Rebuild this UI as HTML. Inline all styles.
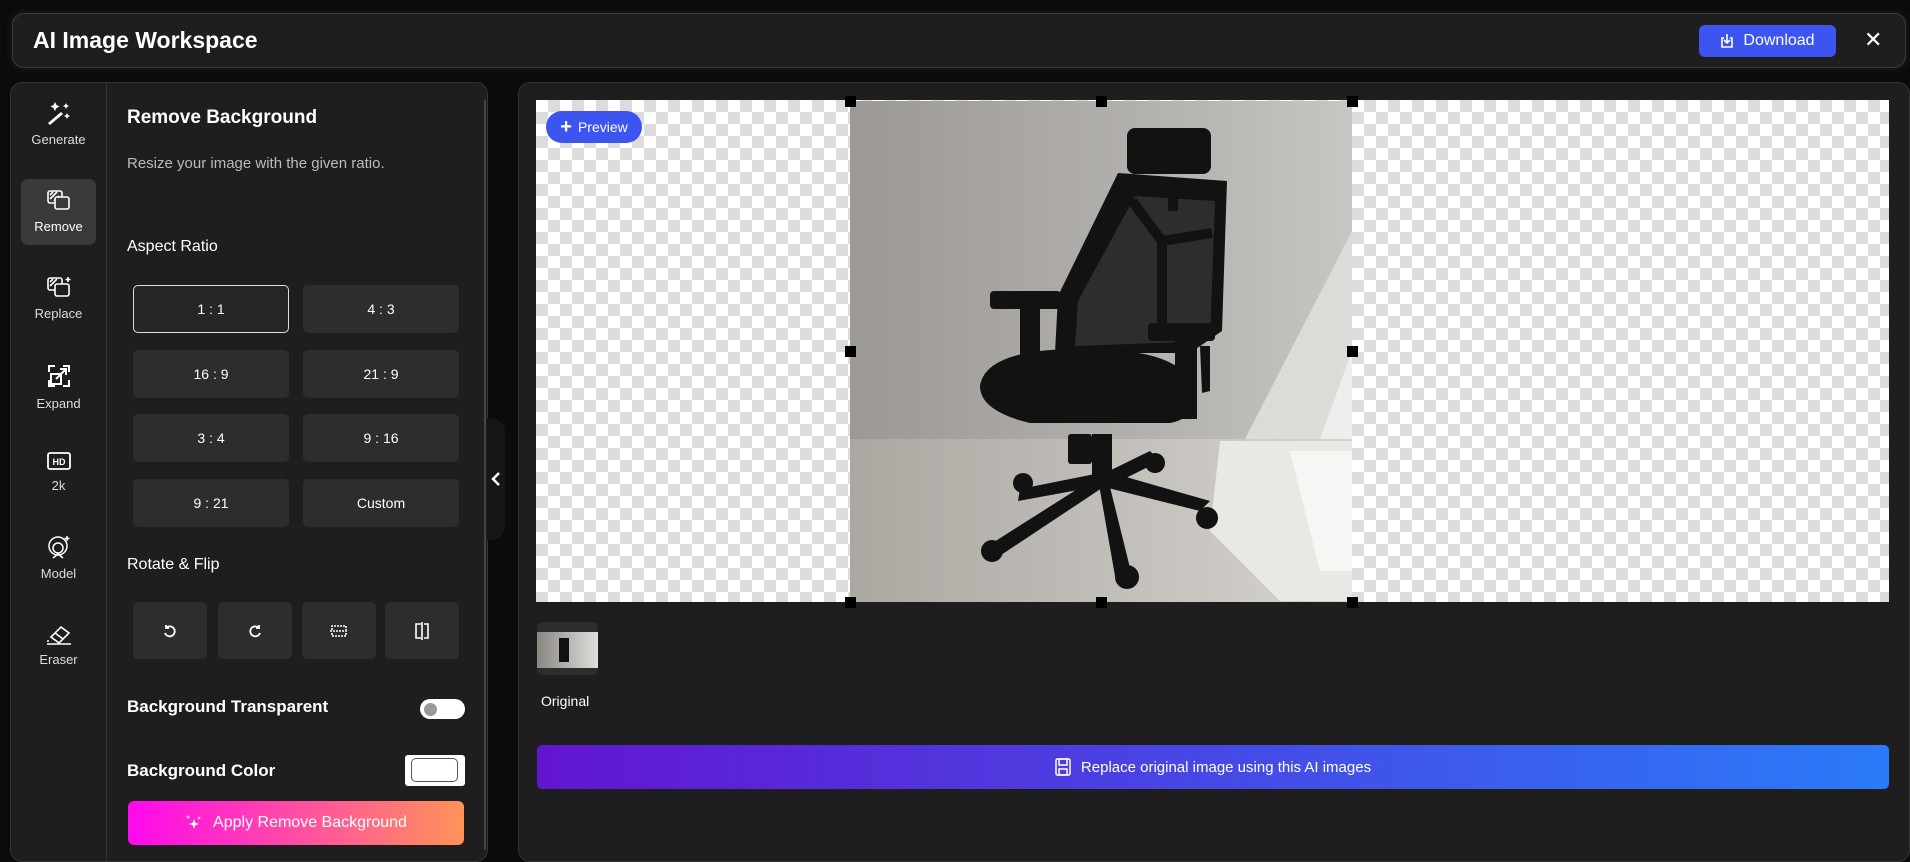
<!DOCTYPE html>
<html><head><meta charset="utf-8"><style>
*{box-sizing:border-box;margin:0;padding:0}
body{width:1910px;height:850px;background:#0b0b0b;font-family:"Liberation Sans",sans-serif;color:#fff;position:relative;overflow:hidden}
.abs{position:absolute}
.header{left:12px;top:13px;width:1894px;height:55px;background:#1e1e1e;border:1px solid #3a3a3a;border-radius:12px;box-shadow:0 0 8px #222}
.title{left:33px;top:27px;font-size:23px;font-weight:bold}
.dl{left:1699px;top:25px;width:137px;height:32px;background:#3d55f0;border-radius:6px;font-size:16px;display:flex;align-items:center;justify-content:center;gap:9px}
.x{left:1864px;top:27px;font-size:22px}
.lp{left:10px;top:82px;width:478px;height:780px;background:#1e1e1e;border:1px solid #333;border-radius:12px}
.side{left:10px;top:82px;width:97px;height:780px;border-right:1px solid #333}
.si{position:absolute;left:21px;width:75px;text-align:center;font-size:13px;color:#ddd}
.si svg{display:block;margin:0 auto 6px}
.act{background:#3a3a3a;border-radius:7px;height:66px;top:179px;padding-top:10px;color:#fff}
.h{font-size:19px;font-weight:bold;left:127px}
.sub{left:127px;top:155px;font-size:15px;color:#bbb}
.lab{left:127px;font-size:16px}
.rb{position:absolute;background:#2d2d2d;border-radius:5px;font-size:14px;display:flex;align-items:center;justify-content:center;height:48px;width:156px}
.rt{position:absolute;background:#2d2d2d;border-radius:5px;height:57px;width:74px;top:602px;display:flex;align-items:center;justify-content:center}
.rp{left:518px;top:82px;width:1392px;height:780px;background:#1e1e1e;border:1px solid #333;border-radius:12px}
.canvas{left:536px;top:100px;width:1353px;height:502px;background-color:#fff;background-image:linear-gradient(45deg,#dcdcdc 25%,transparent 25%,transparent 75%,#dcdcdc 75%),linear-gradient(45deg,#dcdcdc 25%,transparent 25%,transparent 75%,#dcdcdc 75%);background-size:24px 24px;background-position:0 0,12px 12px}
.hd{position:absolute;width:11px;height:11px;background:#000}
</style></head><body>
<div class="abs header"></div>
<div class="abs title">AI Image Workspace</div>
<div class="abs dl"><svg width="14" height="16" viewBox="0 0 14 16" fill="none" stroke="#fff" stroke-width="1.6"><path d="M4 5H2v9h10V5h-2M7 1v9M4 7l3 3 3-3"/></svg>Download</div>
<div class="abs x">✕</div>

<div class="abs lp"></div>
<div class="abs side"></div>
<div class="si" style="top:100px"><svg width="28" height="26" viewBox="0 0 28 26" fill="#fff"><path d="M3 23l13-11 2 2-13 11z"/><path d="M10 2l1.5 3 3 1.5-3 1.5L10 11 8.5 8 5.5 6.5 8.5 5z"/><path d="M21 3l1 2 2 1-2 1-1 2-1-2-2-1 2-1z"/><path d="M22 13l1 2 2 1-2 1-1 2-1-2-2-1 2-1z"/></svg>Generate</div>
<div class="si act"><svg width="28" height="24" viewBox="0 0 28 24" fill="none" stroke="#fff" stroke-width="1.6"><rect x="3" y="2" width="14" height="12" rx="2"/><path d="M5 10l7-7M5 6l3-3M9 12l5-5" /><rect x="10" y="8" width="14" height="12" rx="2" fill="#3a3a3a"/></svg>Remove</div>
<div class="si" style="top:276px"><svg width="28" height="24" viewBox="0 0 28 24" fill="none" stroke="#fff" stroke-width="1.6"><rect x="3" y="2" width="14" height="12" rx="2"/><path d="M5 10l7-7M5 6l3-3"/><rect x="10" y="8" width="14" height="12" rx="2" fill="#1e1e1e"/><path d="M23 1v5M20.5 3.5h5"/></svg>Replace</div>
<div class="si" style="top:362px"><svg width="28" height="28" viewBox="0 0 28 28" fill="none" stroke="#fff" stroke-width="2"><path d="M4 10V4h6M18 4h6v6M24 18v6h-6M10 24H4v-6"/><rect x="6" y="12" width="10" height="10"/><path d="M11 17l10-10M15 7h6v6"/></svg>Expand</div>
<div class="si" style="top:450px"><svg width="26" height="22" viewBox="0 0 26 22" fill="none" stroke="#fff" stroke-width="1.8"><rect x="2" y="3" width="22" height="16" rx="2"/><text x="13" y="15" font-size="9" font-weight="bold" fill="#fff" stroke="none" text-anchor="middle" font-family="Liberation Sans">HD</text></svg>2k</div>
<div class="si" style="top:534px"><svg width="28" height="26" viewBox="0 0 28 26" fill="none" stroke="#fff" stroke-width="1.5"><circle cx="13" cy="12" r="9"/><circle cx="13" cy="14" r="5"/><path d="M8 24l5-4 5 4M22 2v5M19.5 4.5h5"/></svg>Model</div>
<div class="si" style="top:622px"><svg width="30" height="24" viewBox="0 0 30 24" fill="none" stroke="#fff" stroke-width="1.6"><path d="M7 15l10-10 8 6-10 10z"/><path d="M11 11l8 6M3 19h2M3 22h24"/></svg>Eraser</div>

<div class="abs h" style="top:107px">Remove Background</div>
<div class="abs sub">Resize your image with the given ratio.</div>
<div class="abs lab" style="top:238px">Aspect Ratio</div>
<div class="rb" style="left:133px;top:285px;border:1.5px solid #ddd;background:#262626">1 : 1</div>
<div class="rb" style="left:303px;top:285px">4 : 3</div>
<div class="rb" style="left:133px;top:350px">16 : 9</div>
<div class="rb" style="left:303px;top:350px">21 : 9</div>
<div class="rb" style="left:133px;top:414px">3 : 4</div>
<div class="rb" style="left:303px;top:414px">9 : 16</div>
<div class="rb" style="left:133px;top:479px">9 : 21</div>
<div class="rb" style="left:303px;top:479px">Custom</div>
<div class="abs lab" style="top:556px">Rotate &amp; Flip</div>
<div class="rt" style="left:133px"><svg width="16" height="16" viewBox="0 0 16 16" fill="none" stroke="#fff" stroke-width="1.8"><path d="M4 5a5 5 0 1 1-1 5M4 2v3h3"/></svg></div>
<div class="rt" style="left:218px"><svg width="16" height="16" viewBox="0 0 16 16" fill="none" stroke="#fff" stroke-width="1.8"><path d="M12 5a5 5 0 1 0 1 5M12 2v3H9"/></svg></div>
<div class="rt" style="left:302px"><svg width="20" height="14" viewBox="0 0 20 14" fill="none" stroke="#fff" stroke-width="1.6"><path d="M3 6V2h14v4M1 7h18M3 9v3h14V9" stroke-dasharray="2 1"/></svg></div>
<div class="rt" style="left:385px"><svg width="18" height="18" viewBox="0 0 18 18" fill="none" stroke="#fff" stroke-width="1.6"><path d="M8 2H3v14h5M9 0v18M11 2h4v14h-4" /></svg></div>
<div class="abs" style="left:127px;top:697px;font-size:17px;font-weight:bold">Background Transparent</div>
<div class="abs" style="left:420px;top:699px;width:45px;height:20px;border-radius:10px;background:#fff"><div style="position:absolute;left:4px;top:4px;width:13px;height:13px;border-radius:50%;background:#999"></div></div>
<div class="abs" style="left:127px;top:761px;font-size:17px;font-weight:bold">Background Color</div>
<div class="abs" style="left:405px;top:755px;width:60px;height:31px;background:#fff;border-radius:3px"><div style="position:absolute;left:6px;top:3px;width:47px;height:24px;border:1px solid #555;border-radius:5px"></div></div>
<div class="abs" style="left:128px;top:801px;width:336px;height:44px;border-radius:6px;background:linear-gradient(90deg,#ff08ef,#ff9358);display:flex;align-items:center;justify-content:center;gap:10px;font-size:16px"><svg width="18" height="18" viewBox="0 0 18 18" fill="#fff"><path d="M9 5l1.3 3.7L14 10l-3.7 1.3L9 15l-1.3-3.7L4 10l3.7-1.3z"/><path d="M3 1l.6 1.4L5 3l-1.4.6L3 5l-.6-1.4L1 3l1.4-.6z"/><path d="M14 2l.5 1.5L16 4l-1.5.5L14 6l-.5-1.5L12 4l1.5-.5z"/></svg>Apply Remove Background</div>
<div class="abs" style="left:484px;top:100px;width:2px;height:750px;background:#444"></div>
<div class="abs" style="left:487px;top:418px;width:18px;height:122px;background:#161616;border-radius:0 14px 14px 0;display:flex;align-items:center;justify-content:center"><svg width="10" height="14" viewBox="0 0 10 14" fill="none" stroke="#fff" stroke-width="2.4"><path d="M8 1L2 7l6 6"/></svg></div>

<div class="abs rp"></div>
<div class="abs canvas"></div>
<svg class="abs" style="left:850px;top:101px" width="502" height="501" viewBox="0 0 502 501">
<defs><linearGradient id="w" x1="0" y1="0" x2="1" y2="0"><stop offset="0" stop-color="#9c9995"/><stop offset=".7" stop-color="#b8b6b2"/><stop offset="1" stop-color="#c8c6c3"/></linearGradient>
<linearGradient id="f" x1="0" y1="0" x2="1" y2="0"><stop offset="0" stop-color="#aba7a1"/><stop offset="1" stop-color="#d6d4d0"/></linearGradient></defs>
<rect width="502" height="501" fill="url(#w)"/>
<polygon points="395,338 502,130 502,338" fill="#dcdbd8"/>
<polygon points="470,338 502,250 502,338" fill="#eeeeec"/>
<rect y="338" width="502" height="163" fill="url(#f)"/>
<polygon points="370,340 502,340 502,500 430,500 360,430" fill="#e9e8e5"/>
<polygon points="440,350 502,350 502,470 470,470" fill="#f6f6f5"/>
<g fill="#121212">
<rect x="277" y="27" width="84" height="46" rx="8"/>
<path d="M268 72L377 80L372 230L340 252L205 252L208 195Z"/>
</g>
<path d="M285 95L365 100L360 240L225 245L228 200Z" fill="#2e2d2c"/>
<path d="M282 100l30 40 50-8M312 140v100M323 92v18" stroke="#121212" stroke-width="10" fill="none"/>
<g fill="#121212">
<rect x="140" y="190" width="71" height="18" rx="4"/><rect x="170" y="205" width="20" height="50"/>
<path d="M130 285Q135 250 220 248Q335 245 345 290Q345 318 320 322L180 322Q130 310 130 285Z"/>
<rect x="298" y="222" width="67" height="18" rx="4"/><rect x="325" y="238" width="22" height="80"/>
<path d="M350 245l10 0l0 45l-8 2z"/>
<rect x="218" y="333" width="24" height="30" rx="3"/><rect x="242" y="333" width="20" height="50"/>
<path d="M250 372L170 388L168 400L250 385L350 410L360 400L255 370Z"/>
<path d="M248 375L133 448L145 458L255 385Z"/>
<path d="M248 378L265 475L282 475L258 378Z"/>
<path d="M255 372L300 350L310 360L260 385Z"/>
<circle cx="142" cy="450" r="11"/><circle cx="277" cy="476" r="12"/><circle cx="357" cy="417" r="11"/><circle cx="173" cy="382" r="10"/><circle cx="305" cy="362" r="10"/>
</g>
</svg>
<div class="hd" style="left:845px;top:96px"></div><div class="hd" style="left:1096px;top:96px"></div><div class="hd" style="left:1347px;top:96px"></div>
<div class="hd" style="left:845px;top:346px"></div><div class="hd" style="left:1347px;top:346px"></div>
<div class="hd" style="left:845px;top:597px"></div><div class="hd" style="left:1096px;top:597px"></div><div class="hd" style="left:1347px;top:597px"></div>
<div class="abs" style="left:546px;top:111px;width:96px;height:32px;border-radius:16px;background:#3d55f0;font-size:14px;display:flex;align-items:center;justify-content:center;gap:6px"><span style="font-size:20px;font-weight:bold">+</span>Preview</div>
<div class="abs" style="left:537px;top:622px;width:61px;height:53px;border-radius:6px;background:#2d2d2d;overflow:hidden"><div style="position:absolute;left:0;top:10px;width:61px;height:36px;background:linear-gradient(90deg,#8a8783,#e0dfdc)"></div><div style="position:absolute;left:22px;top:16px;width:10px;height:24px;background:#111"></div></div>
<div class="abs" style="left:541px;top:693px;font-size:14px">Original</div>
<div class="abs" style="left:537px;top:745px;width:1352px;height:44px;border-radius:5px;background:linear-gradient(90deg,#6315d0,#2a7bfa);display:flex;align-items:center;justify-content:center;gap:10px;font-size:15px"><svg width="16" height="18" viewBox="0 0 16 18" fill="none" stroke="#fff" stroke-width="1.5"><rect x="1" y="1" width="14" height="16" rx="1.5"/><rect x="4" y="1" width="8" height="6"/><rect x="4" y="11" width="8" height="6"/></svg>Replace original image using this AI images</div>
</body></html>
